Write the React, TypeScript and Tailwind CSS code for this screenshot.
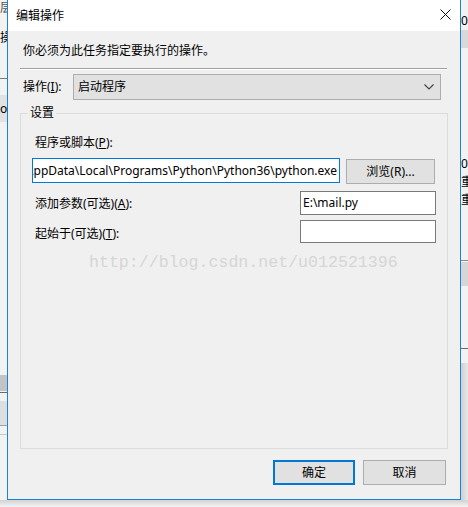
const ui = "font-['Segoe_UI','Noto_Sans','Noto_Sans_CJK_SC',sans-serif] text-[12px] text-black";

function Backdrop() {
  return (
    <>
      {/* left window fragments */}
      <div className="absolute left-0 top-[2px] w-[7px] text-[12px] leading-[12px] text-[#555] overflow-hidden whitespace-nowrap">层</div>
      <div className="absolute left-0 top-[31px] w-[7px] text-[12px] leading-[14px] overflow-hidden whitespace-nowrap">操作</div>
      <div className="absolute left-0 top-[78px] w-[7px] h-[1px] bg-[#7a7a7a]" />
      <div className="absolute left-0 top-[95px] w-[7px] h-[27px] bg-[#e2e2e2] text-[12px] leading-[27px] overflow-hidden whitespace-nowrap">o口</div>
      <div className="absolute left-0 top-[375px] w-[7px] h-[16px] bg-[#c3c3c3]" />
      <div className="absolute left-0 top-[392px] w-[7px] h-[1px] bg-[#6a6a6a]" />
      <div className="absolute left-0 top-[401px] w-[7px] h-[24px] bg-[#dedede]" />
      <div className="absolute left-0 top-[425px] w-[7px] h-[1px] bg-[#a0a0a0]" />
      <div className="absolute left-0 top-[434px] w-[7px] h-[1px] bg-[#c8c8c8]" />
      {/* right window fragments */}
      <div className="absolute left-[461px] top-[12px] w-[7px] h-[18px] text-[12px] leading-[18px] overflow-hidden whitespace-nowrap">00</div>
      <div className="absolute left-[461px] top-[30px] w-[7px] h-[18px] bg-[#d9d9d9]" />
      <div className="absolute left-[461px] top-[155px] w-[7px] text-[12px] leading-[18px] overflow-hidden">0<br />重<br />重</div>
      <div className="absolute left-[461px] top-[260px] w-[7px] h-[1px] bg-[#8a8a8a]" />
      <div className="absolute left-[461px] top-[262px] w-[7px] h-[24px] bg-[#d6d6d6]" />
      <div className="absolute left-[461px] top-[348px] w-[7px] h-[1px] bg-[#6a6a6a]" />
      <div className="absolute left-[461px] top-[363px] w-[7px] h-[144px] bg-gradient-to-r from-[#cfcfcf] to-[#e8e8e8]" />
      <div className="absolute left-0 top-[500px] w-[468px] h-[7px] bg-gradient-to-b from-[#d2d2d2] to-[#f4f4f4]" />
    </>
  );
}

function Btn({ label, primary, cls }: { label: string; primary?: boolean; cls: string }) {
  return (
    <div
      className={
        "flex items-center justify-center bg-[#e1e1e1] " +
        (primary ? "border-2 border-[#0078d7] " : "border border-[#adadad] ") +
        cls
      }
    >
      {label}
    </div>
  );
}

export default function App() {
  return (
    <div className={"relative w-[468px] h-[507px] bg-[#f2f2f2] overflow-hidden " + ui}>
      <Backdrop />
      <div className="absolute left-[7px] top-0 w-[454px] h-[500px] border border-t-0 border-[#1883d7] bg-[#f0f0f0] flex flex-col">
        {/* title bar */}
        <div className="h-[31px] bg-white flex items-center justify-between pl-[8px] pr-[8px]">
          <span className="leading-[16px]">编辑操作</span>
          <svg width="11" height="11" viewBox="0 0 11 11" className="mr-[1px] mt-[-2px]">
            <path d="M0.5 0.5 L10.5 10.5 M10.5 0.5 L0.5 10.5" stroke="#111" strokeWidth="1" />
          </svg>
        </div>

        <div className="mt-[12px] pl-[15px] h-[16px] leading-[16px]">你必须为此任务指定要执行的操作。</div>
        <div className="mt-[9px] ml-[12px] w-[427px] h-[1px] bg-[#a0a0a0]" />
        <div className="ml-[12px] w-[427px] h-[1px] bg-white" />

        <div className="mt-[4px] flex items-center h-[26px]">
          <span className="w-[65px] pl-[15px] leading-[16px]">
            操作(<u>I</u>):
          </span>
          <div className="w-[368px] h-[26px] bg-[#e1e1e1] border border-[#adadad] flex items-center justify-between pl-[4px] pr-[6px]">
            <span className="leading-[16px]">启动程序</span>
            <svg width="10" height="6" viewBox="0 0 10 6">
              <path d="M0.5 0.5 L5 5 L9.5 0.5" fill="none" stroke="#444" strokeWidth="1.2" />
            </svg>
          </div>
        </div>

        {/* group box */}
        <div className="relative mt-[13px] ml-[12px] w-[428px] h-[336px] border border-[#dcdcdc] flex flex-col">
          <span className="absolute left-[7px] top-[-9px] px-[2px] bg-[#f0f0f0] leading-[16px]">设置</span>

          <div className="mt-[21px] pl-[14px] h-[16px] leading-[16px]">
            程序或脚本(<u>P</u>):
          </div>
          <div className="mt-[7px] flex items-start">
            <div className="ml-[11px] w-[308px] h-[25px] bg-white border border-[#0078d7] overflow-hidden flex items-center justify-end pr-[2px] whitespace-nowrap">
              <span className="leading-[16px]">C:\Users\Administrator\AppData\Local\Programs\Python\Python36\python.exe</span>
            </div>
            <Btn label="浏览(R)..." cls="ml-[6px] mt-[1px] w-[89px] h-[25px]" />
          </div>

          <div className="mt-[7px] flex items-start h-[24px]">
            <span className="w-[279px] pl-[14px] pt-[5px] leading-[16px]">
              添加参数(可选)(<u>A</u>):
            </span>
            <div className="w-[136px] h-[24px] bg-white border border-[#7a7a7a] flex items-center pl-[2px]">
              <span className="leading-[16px]">E:\mail.py</span>
            </div>
          </div>

          <div className="mt-[5px] flex items-start h-[23px]">
            <span className="w-[279px] pl-[14px] pt-[6px] leading-[16px]">
              起始于(可选)(<u>T</u>):
            </span>
            <div className="w-[136px] h-[23px] bg-white border border-[#7a7a7a]" />
          </div>

          <div className="mt-[12px] ml-[68px] h-[16px] leading-[16px] text-[16.6px] text-[#d6d6d6] font-['Liberation_Mono',monospace]">
            http://blog.csdn.net/u012521396
          </div>
        </div>

        <div className="mt-[11px] flex justify-end pr-[14px] gap-[8px]">
          <Btn label="确定" primary cls="w-[82px] h-[25px]" />
          <Btn label="取消" cls="w-[83px] h-[25px]" />
        </div>
      </div>
    </div>
  );
}
